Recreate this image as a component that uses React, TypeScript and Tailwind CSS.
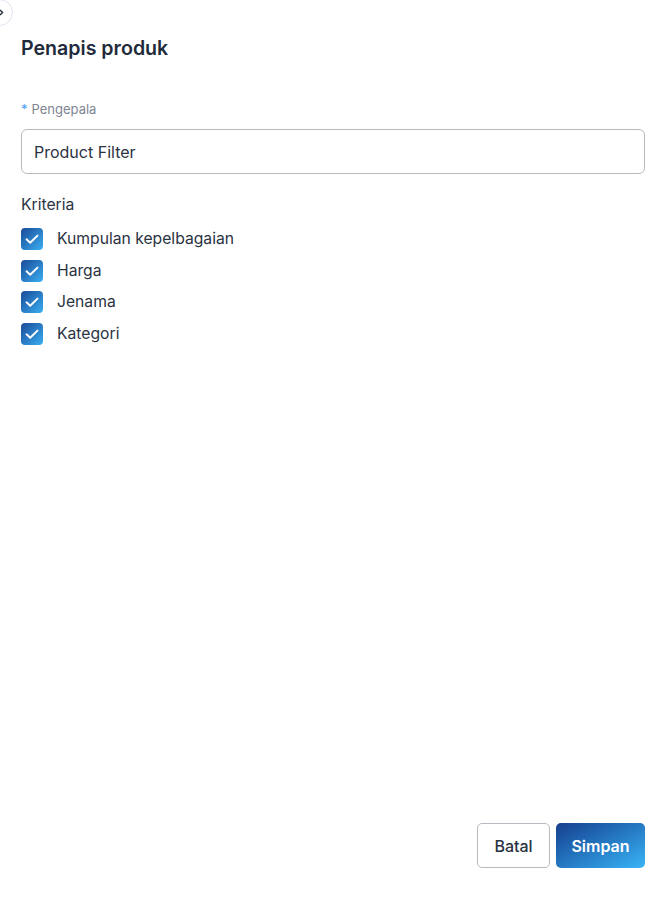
import React from 'react';

const items = ['Kumpulan kepelbagaian', 'Harga', 'Jenama', 'Kategori'];

function CheckBox() {
    return (
        <span className="flex h-[22px] w-[22px] items-center justify-center rounded-[4px] bg-gradient-to-br from-[#1b4a98] to-[#3cb0f2]">
            <svg width="16" height="16" viewBox="0 0 16 16" fill="none">
                <path d="M2.5 8.3 L6.2 11.8 L13.5 4.6" stroke="white" strokeWidth="1.9" strokeLinecap="round" strokeLinejoin="round" />
            </svg>
        </span>
    );
}

export default function App() {
    return (
        <div className="relative flex h-[902px] w-[661px] flex-col overflow-hidden bg-white font-['Inter',sans-serif] text-[#2a3342]">

            {/* collapse handle, mostly off screen */}
            <div className="absolute left-[-14px] top-[-1px] flex h-[27px] w-[27px] items-center justify-center rounded-full border border-[#dde3ee] bg-white pl-[3px]">
                <svg width="5" height="7" viewBox="0 0 5 7" fill="none">
                    <path d="M1 1 L3.5 3.5 L1 6" stroke="#2a3342" strokeWidth="1.5" />
                </svg>
            </div>

            <div className="flex-1 pl-[21px] pr-[16px] pt-[35px]">
                <h1 className="text-[19.6px] font-semibold leading-[26px] text-[#1f2b3a]">Penapis produk</h1>

                <div className="mt-[39px]">
                    <label className="flex items-center gap-[4px] text-[13px] leading-[18px] text-[#7d8591]">
                        <span className="text-[#4a9cf0]">*</span>
                        Pengepala
                    </label>
                    <div className="mt-[11px] flex h-[45px] items-center rounded-[6px] border border-[#b7bbc1] px-[12px] text-[16px] text-[#2a3342]">
                        Product Filter
                    </div>
                </div>

                <div className="mt-[20px]">
                    <div className="text-[15.7px] leading-[22px]">Kriteria</div>
                    <div className="mt-[12px] flex flex-col gap-[9.7px]">
                        {items.map((item, index) => (
                            <div key={index} className="flex items-center gap-[14px]">
                                <CheckBox />
                                <span className="text-[15.7px] leading-[22px]">{item}</span>
                            </div>
                        ))}
                    </div>
                </div>
            </div>

            <div className="flex justify-end gap-[6px] px-[16px] pb-[34px]">
                <button className="h-[45px] w-[73px] rounded-[5px] border border-[#b7bbc1] bg-white text-[16px] font-medium text-[#2a3342]">
                    Batal
                </button>
                <button className="h-[45px] w-[89px] rounded-[5px] bg-gradient-to-br from-[#173f8f] to-[#3ab5f7] text-[16px] font-semibold text-white">
                    Simpan
                </button>
            </div>

        </div>
    );
}
